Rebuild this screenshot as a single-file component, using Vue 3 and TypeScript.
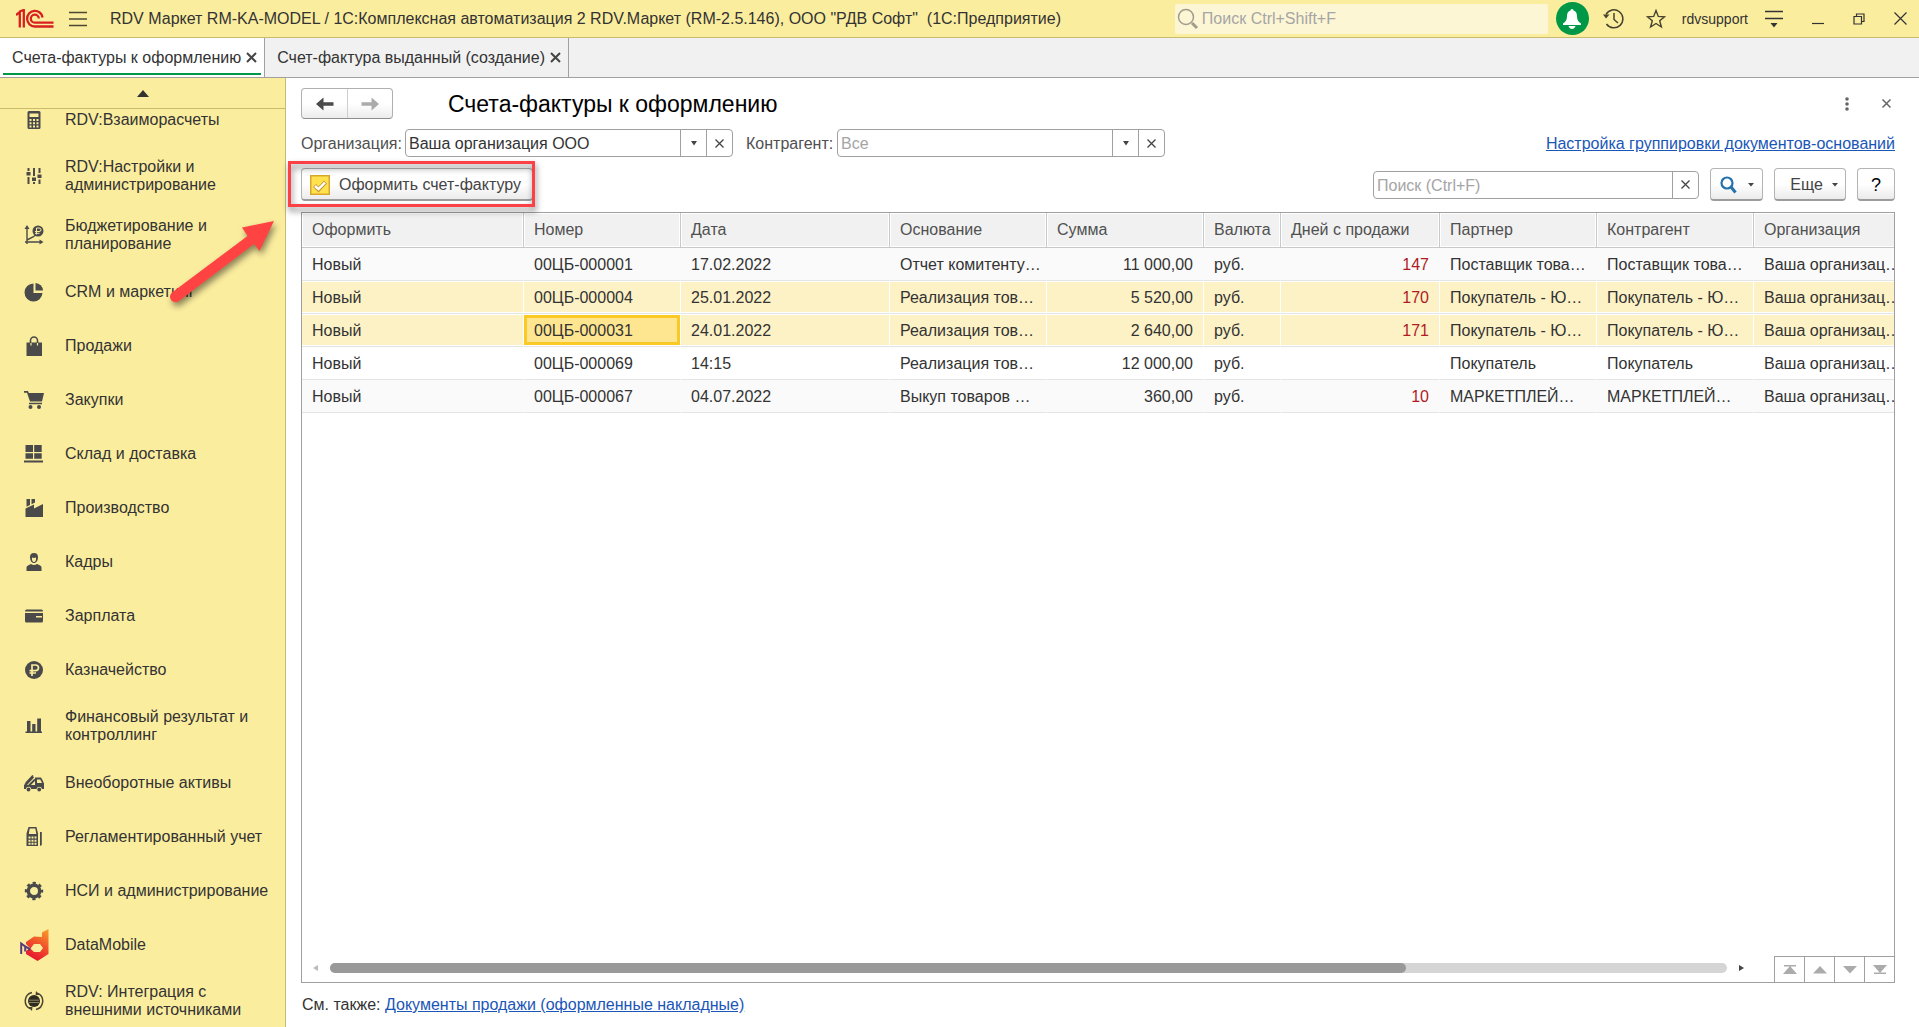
<script setup lang="ts">
import { ref } from 'vue'

interface Section {
  title: string
  icon: string
}

interface Invoice {
  number: string
  date: string
  basis: string
  sum: string
  days: string
  partner: string
}

const sections: Section[] = [
  { title: 'RDV:Взаиморасчеты', icon: 'calculator' },
  { title: 'RDV:Настройки и администрирование', icon: 'sliders' },
  { title: 'Бюджетирование и планирование', icon: 'budget' },
  { title: 'CRM и маркетинг', icon: 'pie' },
  { title: 'Продажи', icon: 'bag' },
  { title: 'Закупки', icon: 'cart' },
  { title: 'Склад и доставка', icon: 'pallet' },
  { title: 'Производство', icon: 'factory' },
  { title: 'Кадры', icon: 'person' },
  { title: 'Зарплата', icon: 'wallet' },
  { title: 'Казначейство', icon: 'ruble' },
  { title: 'Финансовый результат и контроллинг', icon: 'bars' },
  { title: 'Внеоборотные активы', icon: 'truck' },
  { title: 'Регламентированный учет', icon: 'register' },
  { title: 'НСИ и администрирование', icon: 'gear' },
  { title: 'DataMobile', icon: 'datamobile' },
  { title: 'RDV: Интеграция с внешними источниками', icon: 'integration' },
]

const columns: string[] = [
  'Оформить', 'Номер', 'Дата', 'Основание', 'Сумма', 'Валюта',
  'Дней с продажи', 'Партнер', 'Контрагент', 'Организация',
]

const invoices: Invoice[] = [
  { number: '00ЦБ-000001', date: '17.02.2022', basis: 'Отчет комитенту…', sum: '11 000,00', days: '147', partner: 'Поставщик това…' },
  { number: '00ЦБ-000004', date: '25.01.2022', basis: 'Реализация тов…', sum: '5 520,00', days: '170', partner: 'Покупатель - Ю…' },
  { number: '00ЦБ-000031', date: '24.01.2022', basis: 'Реализация тов…', sum: '2 640,00', days: '171', partner: 'Покупатель - Ю…' },
  { number: '00ЦБ-000069', date: '14:15', basis: 'Реализация тов…', sum: '12 000,00', days: '', partner: 'Покупатель' },
  { number: '00ЦБ-000067', date: '04.07.2022', basis: 'Выкуп товаров …', sum: '360,00', days: '10', partner: 'МАРКЕТПЛЕЙ…' },
]

const selected: string[] = ['00ЦБ-000004', '00ЦБ-000031']
const current = '00ЦБ-000031'

const organization = ref('Ваша организация ООО')
const counterparty = ref('')
const search = ref('')
const globalSearch = ref('')
</script>

<template>
  <div class="app">
    <header class="topbar">
      <svg class="logo" width="38" height="20" viewBox="0 0 38 20" fill="none" stroke="#d8201f" stroke-width="2.300">
        <path d="M0 6 3.800 3v15.500M3.500 2.500 7.800 1v17.500" />
        <path d="M26.600 8.500A7.800 7.800 0 1 0 18.800 17.500H37.500" />
        <path d="M22.800 9.500A4 4 0 1 0 18.800 13.700H37.500" />
      </svg>
      <button class="bare menu" aria-label="Меню">
        <svg width="18" height="16" viewBox="0 0 18 16" stroke="#4a4733" stroke-width="1.500"><path d="M0 1.500h18M0 8h18M0 14.500h18" /></svg>
      </button>
      <span class="app-title">RDV Маркет RM-KA-MODEL / 1С:Комплексная автоматизация 2 RDV.Маркет (RM-2.5.146), ООО "РДВ Софт"&nbsp; (1С:Предприятие)</span>
      <label class="global-search">
        <svg width="22" height="22" viewBox="0 0 22 22" fill="none" stroke="#a09c8c"><circle cx="9" cy="9" r="7.500" stroke-width="1.500" /><path d="m15 15 5 5" stroke-width="3" /></svg>
        <input v-model="globalSearch" type="text" placeholder="Поиск Ctrl+Shift+F" aria-label="Поиск" />
      </label>
      <button class="bare bell" aria-label="Оповещения">
        <svg width="20" height="20" viewBox="0 0 20 20" fill="#fff"><path d="M10 0c1 0 1.500.8 1.500 1.600C14 2.500 15 4.500 15 7c0 4 1.500 6 4 7.500V16H1v-1.500C3.500 13 5 11 5 7c0-2.500 1-4.500 3.500-5.400C8.500.8 9 0 10 0zM6.500 17h7c-.5 2-2 3-3.500 3s-3-1-3.500-3z" /></svg>
      </button>
      <button class="bare history" aria-label="История">
        <svg width="22" height="22" viewBox="0 0 22 22" fill="none" stroke="#45432f" stroke-width="1.500"><path d="M3 6.500A9 9 0 1 1 3.500 16M11 5v6.500l4 3.500" /><path d="M0 6.500h6.500L3 10.500z" fill="#45432f" stroke="none" /></svg>
      </button>
      <button class="bare star" aria-label="Избранное">
        <svg width="20" height="20" viewBox="0 0 20 20" fill="none" stroke="#45432f" stroke-width="1.400"><path d="m10 1.500 2.300 5.900 6.300.4-4.900 4 1.700 6.200L10 14.500 4.600 18l1.700-6.200-4.900-4 6.300-.4z" /></svg>
      </button>
      <span class="user">rdvsupport</span>
      <button class="bare settings" aria-label="Настройки">
        <svg width="18" height="18" viewBox="0 0 18 18"><path d="M0 1.500h18M0 8.500h18" stroke="#333" stroke-width="1.500" /><path d="M5.500 13h7L9 17.500z" fill="#333" /></svg>
      </button>
      <button class="bare window-btn" aria-label="Свернуть">
        <svg width="12" height="12" viewBox="0 0 12 12" stroke="#333"><path d="M0 10.500h12" stroke-width="1.200" /></svg>
      </button>
      <button class="bare window-btn" aria-label="Восстановить">
        <svg width="12" height="12" viewBox="0 0 12 12" fill="none" stroke="#333" stroke-width="1.200"><path d="M1 3.500h7.500V11H1zM3.500 3.500V1H11v7.500H8.500" /></svg>
      </button>
      <button class="bare window-btn" aria-label="Закрыть">
        <svg width="13" height="13" viewBox="0 0 13 13" stroke="#333" stroke-width="1.200"><path d="m.5.5 12 12m0-12-12 12" /></svg>
      </button>
    </header>

    <nav class="tabs">
      <div class="tab active">
        <a href="#">Счета-фактуры к оформлению</a>
        <button class="bare" aria-label="Закрыть вкладку"><svg width="11" height="11" viewBox="0 0 11 11" stroke="#444" stroke-width="2"><path d="m1 1 9 9m0-9-9 9" /></svg></button>
      </div>
      <div class="tab">
        <a href="#">Счет-фактура выданный (создание)</a>
        <button class="bare" aria-label="Закрыть вкладку"><svg width="11" height="11" viewBox="0 0 11 11" stroke="#444" stroke-width="2"><path d="m1 1 9 9m0-9-9 9" /></svg></button>
      </div>
    </nav>

    <div class="body">
      <aside class="sidebar">
        <button class="bare scroll-up" aria-label="Прокрутить вверх">
          <svg width="12" height="7" viewBox="0 0 12 7" fill="#333"><path d="M0 7 6 0l6 7z" /></svg>
        </button>
        <div class="list-view">
          <ul>
            <li v-for="s in sections" :key="s.title">
              <a href="#">
                <span class="icon">
                  <svg v-if="s.icon === 'datamobile'" width="29" height="32" viewBox="0 0 29 32">
                    <defs><linearGradient id="dm" x1="1" y1="0" x2=".6" y2="1"><stop offset="0" stop-color="#f7a12b" /><stop offset=".5" stop-color="#f1592a" /><stop offset="1" stop-color="#e81c2e" /></linearGradient></defs>
                    <path fill-rule="evenodd" d="M22 8V3.500L28.500 0v25L17.500 32 6 25v-3l4-3-4-4v-2l8-5.500zM14 15l-3.500 4.500L14 23h6l3-4-3-4z" fill="url(#dm)" />
                    <path d="M1.200 25V14.500l4 3v5M5.200 17.500l4 2v2" fill="none" stroke="#5a3a7c" stroke-width="2" />
                  </svg>
                  <svg v-else width="20" height="20" viewBox="0 0 20 20" fill="#4a4a4a">
                    <template v-if="s.icon === 'calculator'">
                      <path fill-rule="evenodd" d="M5 1h10q1.500 0 1.500 1.500v15Q16.500 19 15 19H5q-1.500 0-1.500-1.500v-15Q3.500 1 5 1zm.5 2.500V7h9V3.500zM5.500 9v2h2V9zm3.500 0v2h2V9zm3.500 0v2h2V9zm-7 3.200v2h2v-2zm3.500 0v2h2v-2zm3.500 0v2h2v-2zm-7 3.200v2h2v-2zm3.500 0v2h2v-2zm3.500 0v2h2v-2z" />
                    </template>
                    <template v-else-if="s.icon === 'sliders'">
                      <path d="M3.500 2h2v3h-2zM2.500 6h4v3.500h-4zM3.500 11h2v7h-2zM9 2h2v8H9zM8 11.500h4V15H8zM9 16h2v2H9zM14.500 2h2v5h-2zM13.500 8.500h4V12h-4zM14.500 13.500h2V18h-2z" />
                    </template>
                    <template v-else-if="s.icon === 'budget'">
                      <path d="M3 0 .5 4h5zM19.500 17l-4-2.500v5z" />
                      <path d="M3 3v16M1 17h15M3 15l6-3 4-3" fill="none" stroke="#4a4a4a" stroke-width="1.400" />
                      <circle cx="14" cy="6" r="5.500" />
                      <path d="M12.500 9.500V3H15q2 0 2 1.800T15 6.500h-4m0 1.800h4.500" fill="none" stroke="#fbed9e" stroke-width="1" />
                    </template>
                    <template v-else-if="s.icon === 'pie'">
                      <path d="M9.500 1.500V11h9A9 9 0 1 1 9.500 1.500z" /><path d="M11.500 1a8 8 0 0 1 7.500 7.500h-7.500z" />
                    </template>
                    <template v-else-if="s.icon === 'bag'">
                      <path d="M2.500 6.500h15.500V20H2.500z" /><path d="M6.500 9V4.500a3.500 3.500 0 0 1 7 0V9" fill="none" stroke="#4a4a4a" stroke-width="1.600" /><path d="M7 7v2.500M13.500 7v2.500" stroke="#fbed9e" stroke-width="1.200" />
                    </template>
                    <template v-else-if="s.icon === 'cart'">
                      <path d="M0 1h4l.8 2H20l-2 8.500H6L3 2.800H0zM5 12.800h13v1.500H5z" /><circle cx="6.500" cy="17" r="2" /><circle cx="15" cy="17" r="2" />
                    </template>
                    <template v-else-if="s.icon === 'pallet'">
                      <path d="M1.500 1H9v7H1.500zM10.200 1h7.500v7h-7.500zM1.500 9.200H9v5.600H1.500zM10.200 9.200h7.500v5.600h-7.500zM0 16.500h19v2H0z" />
                    </template>
                    <template v-else-if="s.icon === 'factory'">
                      <path d="M1.500 10.500 10 6.500v4L19 6v13H1.500zM2.500 1H6v6L2.500 8.700zM7.500 1H11v3.500L7.500 6.200z" />
                    </template>
                    <template v-else-if="s.icon === 'person'">
                      <path d="M10 1c3 0 4.200 1.800 4 4.500C13.800 8.500 12.500 11 10 11S6.200 8.500 6 5.500C5.800 2.800 7 1 10 1z" /><path d="M8 5.500q2 .8 4 0c.3 2.500-.5 4.500-2 4.500s-2.300-2-2-4.500z" fill="#fbed9e" /><path d="M2.500 19v-3.500C2.500 13.500 5 13 7 12q3 2 6 0c2 1 4.500 1.500 4.500 3.500V19z" />
                    </template>
                    <template v-else-if="s.icon === 'wallet'">
                      <path fill-rule="evenodd" d="M2.500 3.500h15q1.500 0 1.500 2H1q0-2 1.500-2zM1 7h18v8q0 1.500-1.500 1.500h-15Q1 16.500 1 15zm11 3v1.500h6V10z" />
                    </template>
                    <template v-else-if="s.icon === 'ruble'">
                      <circle cx="10" cy="10" r="9" /><path d="M8 16V5h3.500q3 0 3 2.800t-3 2.800H5.500M5.500 13H12" fill="none" stroke="#fbed9e" stroke-width="1.700" />
                    </template>
                    <template v-else-if="s.icon === 'bars'">
                      <path d="M1.500 15.500H18V17H1.500zM3 5h3.500v11H3zM8.200 8h3.300v8H8.200zM13.200 2.500H17V16h-3.800z" />
                    </template>
                    <template v-else-if="s.icon === 'truck'">
                      <path d="M0 12.500h2.500L10 4.500 8.500 3 1 10.500z" /><path d="M2 10 9 2.500M5 12.500l6-6" fill="none" stroke="#4a4a4a" stroke-width="1.800" />
                      <path fill-rule="evenodd" d="M0 12h11V4.500h6q1.800 2.500 3 6V16h-2a2.800 2.800 0 0 0-5.500 0H7.300a2.800 2.800 0 0 0-5.500 0H0zm13-5.500V10h5q-.8-2-1.800-3.500z" /><circle cx="4.500" cy="16.500" r="1.900" /><circle cx="15.200" cy="16.500" r="1.900" />
                    </template>
                    <template v-else-if="s.icon === 'register'">
                      <path fill-rule="evenodd" d="M4.500 0h8l1.500 6.500V19H2.500V6.500zm1.200 1.500L4.800 7h7.500l-1-5.500zM4.500 9.500v2h2v-2zm3 0v2h2v-2zm3 0v2h2v-2zm-6 3.200v2h2v-2zm3 0v2h2v-2zm3 0v2h2v-2zm-6 3v2h2v-2zm3 0v2h2v-2zm3 0v2h2v-2z" /><path d="M16 5h1.800v13L16 19z" />
                    </template>
                    <template v-else-if="s.icon === 'gear'">
                      <circle cx="10" cy="10" r="5.700" fill="none" stroke="#4a4a4a" stroke-width="3.400" /><circle cx="10" cy="10" r="8" fill="none" stroke="#4a4a4a" stroke-width="2.400" stroke-dasharray="3.200 3.083" stroke-dashoffset="1.600" />
                    </template>
                    <template v-else>
                      <circle cx="10" cy="10" r="6" fill="#2e2c22" /><path d="M5 9.200h10M5 11.500h10" stroke="#8a835c" /><path d="M8 1.500A8.700 8.700 0 0 0 6 17.700M12 18.500A8.700 8.700 0 0 0 14 2.300" fill="none" stroke="#4a4632" stroke-width="1.500" /><path d="m12 0-.5 4L16 4zM8 20l.5-4L4 16z" fill="#4a4632" />
                    </template>
                  </svg>
                </span>
                <span class="section-title">{{ s.title }}</span>
              </a>
            </li>
          </ul>
        </div>
        <svg class="pointer" width="120" height="100" viewBox="0 0 120 100">
          <path d="M110 10 95.500 40 90 33 15 90a5 5 0 0 1-7-8.500L83.500 25 78 16.500z" fill="#ff4343" />
        </svg>
      </aside>

      <main class="content">
        <div class="heading">
          <div class="history-nav">
            <button aria-label="Назад"><svg width="18" height="14" viewBox="0 0 18 14" fill="#4a4a4a"><path d="M0 7 7.500.5v4.800H17.500v3.500H7.500v4.700z" /></svg></button>
            <button aria-label="Вперед"><svg width="18" height="14" viewBox="0 0 18 14" fill="#ababab"><path d="M18 7 10.500.5v4.800H.5v3.500h10v4.700z" /></svg></button>
          </div>
          <h1>Счета-фактуры к оформлению</h1>
          <button class="bare more" aria-label="Ещё"><svg width="4" height="14" viewBox="0 0 4 14" fill="#666"><circle cx="2" cy="2" r="1.800" /><circle cx="2" cy="7" r="1.800" /><circle cx="2" cy="12" r="1.800" /></svg></button>
          <button class="bare" aria-label="Закрыть форму"><svg width="9" height="9" viewBox="0 0 9 9" stroke="#666" stroke-width="1.500"><path d="m.5.5 8 8m0-8-8 8" /></svg></button>
        </div>

        <div class="filters">
          <label for="org">Организация:</label>
          <div class="field combo">
            <input id="org" v-model="organization" type="text" />
            <button aria-label="Выбрать"><svg width="8" height="5" viewBox="0 0 8 5" fill="#444"><path d="M1 0h6L4 4.500z" /></svg></button>
            <button aria-label="Очистить"><svg width="9" height="9" viewBox="0 0 9 9" stroke="#444" stroke-width="1.300"><path d="m.5.5 8 8m0-8-8 8" /></svg></button>
          </div>
          <label for="partner" class="second">Контрагент:</label>
          <div class="field combo">
            <input id="partner" v-model="counterparty" type="text" placeholder="Все" />
            <button aria-label="Выбрать"><svg width="8" height="5" viewBox="0 0 8 5" fill="#444"><path d="M1 0h6L4 4.500z" /></svg></button>
            <button aria-label="Очистить"><svg width="9" height="9" viewBox="0 0 9 9" stroke="#444" stroke-width="1.300"><path d="m.5.5 8 8m0-8-8 8" /></svg></button>
          </div>
          <a class="link push" href="#">Настройка группировки документов-оснований</a>
        </div>

        <div class="commands">
          <div class="marked">
            <button class="btn create">
              <svg width="20" height="20" viewBox="0 0 20 20"><path d="M.75.75h18.500v18.500H.75z" fill="#ffe24d" stroke="#d9a62e" stroke-width="1.500" /><path d="m4.500 10.500 4 4 7-7.500" fill="none" stroke="#c99a35" stroke-width="4.200" /><path d="m5 11 3.500 3.200L15 7.500" fill="none" stroke="#fff" stroke-width="2.400" /></svg>
              Оформить счет-фактуру
            </button>
          </div>
          <div class="field search push">
            <input v-model="search" type="text" placeholder="Поиск (Ctrl+F)" aria-label="Поиск в списке" />
            <button aria-label="Очистить"><svg width="9" height="9" viewBox="0 0 9 9" stroke="#444" stroke-width="1.300"><path d="m.5.5 8 8m0-8-8 8" /></svg></button>
          </div>
          <button class="btn find" aria-label="Найти">
            <svg width="17" height="18" viewBox="0 0 17 18" fill="none" stroke="#2472ab"><circle cx="7" cy="7" r="5.500" stroke-width="2.200" /><path d="m11 11 4.500 5.500" stroke-width="3" /></svg>
            <svg width="6" height="4" viewBox="0 0 6 4" fill="#444"><path d="M0 0h6L3 3.500z" /></svg>
          </button>
          <button class="btn extra">Еще <svg width="6" height="4" viewBox="0 0 6 4" fill="#444"><path d="M0 0h6L3 3.500z" /></svg></button>
          <button class="btn help">?</button>
        </div>

        <section class="grid">
          <div class="grid-view">
            <table>
              <colgroup>
                <col class="c-create" /><col class="c-mid" /><col class="c-date" /><col class="c-mid" /><col class="c-mid" />
                <col class="c-cur" /><col class="c-days" /><col class="c-mid" /><col class="c-mid" /><col />
              </colgroup>
              <thead>
                <tr><th v-for="c in columns" :key="c" scope="col">{{ c }}</th></tr>
              </thead>
              <tbody>
                <tr v-for="i in invoices" :key="i.number" :class="{ selected: selected.includes(i.number) }">
                  <td>Новый</td>
                  <td :class="{ current: i.number === current }">{{ i.number }}</td>
                  <td>{{ i.date }}</td>
                  <td>{{ i.basis }}</td>
                  <td class="num">{{ i.sum }}</td>
                  <td>руб.</td>
                  <td class="num days">{{ i.days }}</td>
                  <td>{{ i.partner }}</td>
                  <td>{{ i.partner }}</td>
                  <td>Ваша организац…</td>
                </tr>
              </tbody>
            </table>
          </div>
          <div class="grid-foot">
            <svg class="arrow" width="5" height="6" viewBox="0 0 5 6" fill="#bbb"><path d="M5 0v6L0 3z" /></svg>
            <div class="track"><div class="thumb"></div></div>
            <svg class="arrow" width="5" height="6" viewBox="0 0 5 6" fill="#444"><path d="M0 0v6l5-3z" /></svg>
            <div class="pager">
              <button aria-label="В начало"><svg width="14" height="9" viewBox="0 0 14 9" fill="#ababab"><path d="M1 0h12v1.500H1zM0 9l7-8 7 8z" /></svg></button>
              <button aria-label="Вверх"><svg width="14" height="9" viewBox="0 0 14 9" fill="#ababab"><path d="m0 8.500 7-7.500 7 7.500z" /></svg></button>
              <button aria-label="Вниз"><svg width="14" height="9" viewBox="0 0 14 9" fill="#ababab"><path d="m0 1 7 7.500L14 1z" /></svg></button>
              <button aria-label="В конец"><svg width="14" height="9" viewBox="0 0 14 9" fill="#ababab"><path d="M1 7.500h12V9H1zM0 0l7 8 7-8z" /></svg></button>
            </div>
          </div>
        </section>

        <footer class="see-also">См. также: <a class="link" href="#">Документы продажи (оформленные накладные)</a></footer>
      </main>
    </div>
  </div>
</template>

<style>
body {
  margin: 0;
}
</style>

<style scoped>
.app {
  height: 100vh;
  display: flex;
  flex-direction: column;
  overflow: hidden;
  background: #fff;
  color: #333;
  font: 16px/18px "Liberation Sans", Arial, sans-serif;
}

.app *,
.app *::before,
.app *::after {
  box-sizing: border-box;
}

button,
input {
  font: inherit;
  color: inherit;
  margin: 0;
}

button {
  display: flex;
  align-items: center;
  justify-content: center;
  padding: 0;
}

input {
  min-width: 0;
  border: 0;
  outline: 0;
  background: transparent;
}

input::placeholder {
  color: #a5a5a5;
  opacity: 1;
}

svg {
  display: block;
  flex: none;
}

.bare {
  border: 0;
  background: none;
}

.link {
  color: #1a56b8;
  text-decoration: underline;
}

.push {
  margin-left: auto;
}

/* Top bar */
.topbar {
  flex: none;
  display: flex;
  align-items: center;
  height: 38px;
  padding: 0 12px 0 16px;
  background: #fbed9e;
  border-bottom: 1px solid #c8bb6e;
}

.menu {
  margin-left: 15px;
}

.app-title {
  flex: 1;
  margin-left: 23px;
  white-space: nowrap;
}

.global-search {
  display: flex;
  align-items: center;
  width: 373px;
  height: 30px;
  padding-left: 2px;
  border-radius: 2px;
  background: #fdf6d5;
}

.global-search input {
  flex: 1;
  padding: 0 0 0 3px;
}

.bell {
  width: 33px;
  height: 33px;
  margin-left: 8px;
  border-radius: 50%;
  background: #009846;
}

.history {
  margin-left: 14px;
}

.star {
  margin-left: 21px;
}

.user {
  margin-left: 16px;
  font-size: 14px;
}

.settings {
  margin: 0 29px 0 17px;
}

.window-btn + .window-btn {
  margin-left: 29px;
}

/* Tabs */
.tabs {
  flex: none;
  display: flex;
  height: 40px;
  background: #f1f1f1;
  border-bottom: 1px solid #a0a0a0;
}

.tab {
  position: relative;
  display: flex;
  align-items: center;
  gap: 5px;
  padding: 0 7px 0 12px;
  border-right: 1px solid #a0a0a0;
}

.tab a {
  color: #333;
  text-decoration: none;
}

.tab.active {
  background: #fff;
}

.tab.active::after {
  content: "";
  position: absolute;
  right: 3px;
  bottom: 2px;
  left: 3px;
  height: 2px;
  background: #009846;
}

.body {
  flex: 1;
  display: flex;
  min-height: 0;
}

/* Sections */
.sidebar {
  position: relative;
  flex: none;
  display: flex;
  flex-direction: column;
  width: 286px;
  background: #fbed9e;
  border-right: 1px solid #c8bb6e;
}

.scroll-up {
  flex: none;
  height: 31px;
  border-bottom: 1px solid #c8bb6e;
}

.list-view {
  flex: 1;
  min-height: 0;
  overflow: hidden;
}

.list-view ul {
  margin: -17px 0 0;
  padding: 0;
  list-style: none;
}

.list-view a {
  display: flex;
  align-items: center;
  min-height: 54px;
  padding: 12px 16px 11px 19px;
  color: #333;
  text-decoration: none;
}

.icon {
  flex: none;
  display: flex;
  justify-content: center;
  width: 30px;
  margin: -4px 16px -4px 0;
}

.pointer {
  position: absolute;
  top: 133px;
  left: 164px;
  filter: drop-shadow(2px 4px 3px rgba(0, 0, 0, 0.45));
}

/* Form */
.content {
  flex: 1;
  display: flex;
  flex-direction: column;
  min-width: 0;
  padding: 10px 24px 0 15px;
}

.heading {
  display: flex;
  align-items: center;
  height: 31px;
  padding-right: 4px;
}

.history-nav {
  display: flex;
  height: 31px;
  border: 1px solid #b0b0b0;
  border-bottom-color: #8e8e8e;
  border-radius: 4px;
  background: linear-gradient(#fff 50%, #ececec);
}

.history-nav button {
  width: 45px;
  border: 0;
  background: none;
}

.history-nav button + button {
  border-left: 1px solid #cfcfcf;
}

h1 {
  flex: 1;
  margin: 0 0 0 55px;
  color: #000;
  font-size: 23px;
  line-height: 28px;
  font-weight: 400;
}

.more {
  margin-right: 33px;
}

.filters {
  display: flex;
  align-items: center;
  height: 28px;
  margin-top: 10px;
}

.filters label,
.filters .link {
  padding-top: 2px;
}

.filters label {
  width: 104px;
  color: #505050;
}

.filters .second {
  width: 91px;
  margin-left: 13px;
}

.field {
  display: flex;
  height: 28px;
  border: 1px solid #a0a0a0;
  border-radius: 4px;
  background: #fff;
}

.field input {
  flex: 1;
  padding: 2px 3px 0;
}

.field button {
  width: 26px;
  border: 0;
  border-left: 1px solid #a0a0a0;
  background: none;
}

.combo {
  width: 328px;
}

.search {
  width: 326px;
}

.commands {
  display: flex;
  align-items: center;
  gap: 11px;
  height: 33px;
  margin-top: 11px;
}

.btn {
  height: 33px;
  padding-top: 2px;
  border: 1px solid #b4b4b4;
  border-bottom: 2px solid #9c9c9c;
  border-radius: 4px;
  background: linear-gradient(#fff 50%, #ebebeb);
  color: #444;
}

.marked {
  position: relative;
}

.marked::after {
  content: "";
  position: absolute;
  inset: -7px -2px -6px -13px;
  border: 3px solid #fb4146;
  filter: drop-shadow(1px 4px 3px rgba(0, 0, 0, 0.5));
  pointer-events: none;
}

.create {
  justify-content: flex-start;
  gap: 9px;
  width: 232px;
  padding-left: 8px;
}

.find {
  gap: 11px;
  width: 53px;
}

.extra {
  gap: 9px;
  width: 72px;
  padding-left: 8px;
}

.help {
  width: 38px;
  color: #000;
  font-size: 18px;
}

/* List */
.grid {
  flex: 1;
  display: flex;
  flex-direction: column;
  min-height: 0;
  margin-top: 11px;
  border: 1px solid #a0a0a0;
}

.grid-view {
  flex: 1;
  min-height: 0;
  overflow: hidden;
}

table {
  width: calc(100% + 17px);
  table-layout: fixed;
  border-collapse: separate;
  border-spacing: 0;
}

.c-create {
  width: 222px;
}

.c-mid {
  width: 157px;
}

.c-date {
  width: 209px;
}

.c-cur {
  width: 77px;
}

.c-days {
  width: 159px;
}

th,
td {
  overflow: hidden;
  text-align: left;
  white-space: nowrap;
}

th {
  height: 35px;
  padding: 0 0 0 10px;
  border-right: 1px solid #c8c8c8;
  border-bottom: 1px solid #c8c8c8;
  background: #f1f1f1;
  box-shadow: inset 0 0 0 1px #fff;
  color: #505050;
  font-weight: 400;
}

td {
  height: 33px;
  padding: 2px 0 0 10px;
  border-right: 1px solid transparent;
  border-bottom: 1px solid #e4e4e4;
}

tbody tr:nth-child(odd) {
  background: #fafafa;
}

tbody tr.selected {
  background: #fff;
}

.selected td {
  background: #fdf2c6;
  background-clip: padding-box;
  box-shadow: inset 0 1px #fff, inset 0 -1px #fff;
}

.selected td.current {
  background-color: #fee590;
  box-shadow: inset 0 1px #fff, inset 0 -1px #fff, inset 0 4px #fbc926, inset 0 -4px #fbc926, inset 3px 0 #fbc926, inset -3px 0 #fbc926;
}

td.num {
  padding-right: 10px;
  text-align: right;
}

td.days {
  color: #b01c24;
}

.grid-foot {
  flex: none;
  display: flex;
  align-items: center;
  height: 26px;
  padding-left: 11px;
}

.arrow,
.track {
  margin-bottom: 2px;
}

.track {
  flex: 1;
  height: 10px;
  margin-right: 12px;
  margin-left: 12px;
  border-radius: 5px;
  background: #d5d5d5;
}

.thumb {
  width: 77%;
  height: 10px;
  border-radius: 5px;
  background: #999;
}

.pager {
  display: flex;
  height: 26px;
  margin-left: 30px;
  border-top: 1px solid #a0a0a0;
}

.pager button {
  width: 30px;
  border: 0;
  border-left: 1px solid #a0a0a0;
  background: none;
}

.see-also {
  flex: none;
  height: 44px;
  padding: 13px 1px 0;
}
</style>
